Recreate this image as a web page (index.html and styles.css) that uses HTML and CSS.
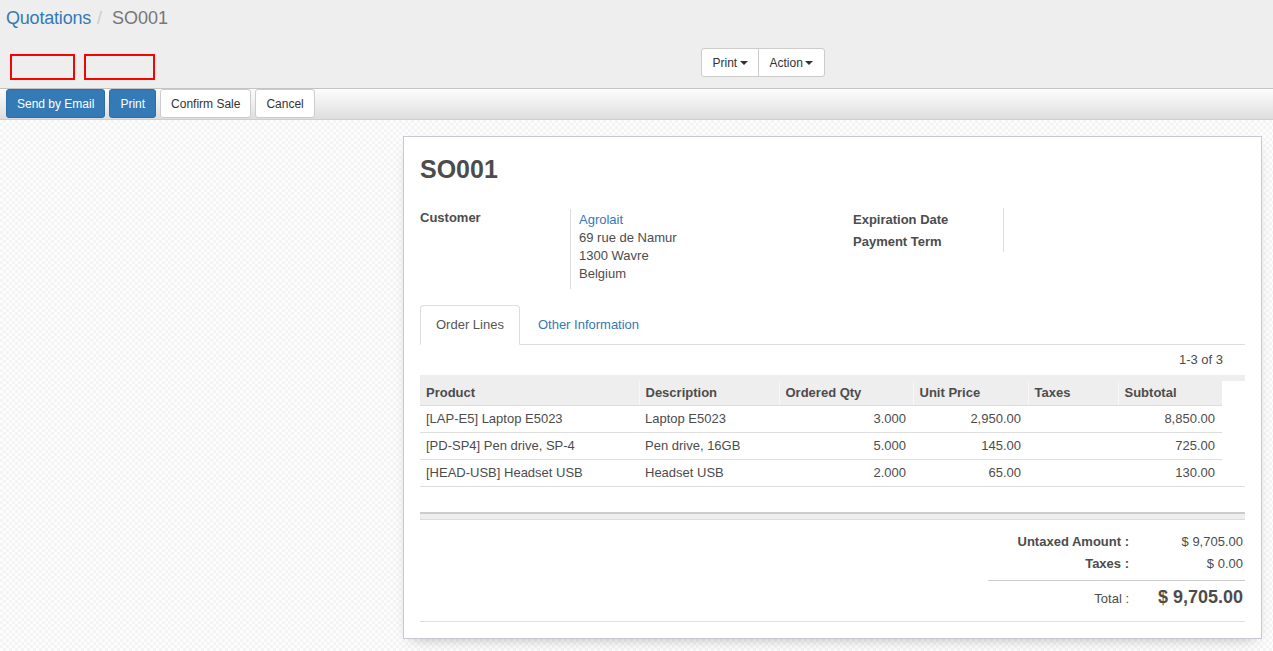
FILE: index.html
```html
<!DOCTYPE html>
<html>
<head>
<meta charset="utf-8">
<link rel="stylesheet" href="styles.css">
</head>
<body>
<header class="cp">
  <div class="crumbs"><a class="crumb-link">Quotations</a><span class="sep">/</span><span class="crumb-active">SO001</span></div>
  <div class="cp-row">
    <div class="cp-left"><div class="ph ph-a"></div><div class="ph ph-b"></div></div>
    <div class="cp-right">
      <div class="btn-group">
        <button class="gbtn">Print <span class="caret"></span></button>
        <button class="gbtn">Action <span class="caret"></span></button>
      </div>
    </div>
  </div>
</header>
<div class="statusbar">
  <button class="btn primary">Send by Email</button>
  <button class="btn primary">Print</button>
  <button class="btn plain">Confirm Sale</button>
  <button class="btn plain">Cancel</button>
</div>
<main class="content">
  <div class="sheet">
    <h1 class="title">SO001</h1>
    <div class="groups">
      <div class="group">
        <div class="label">Customer</div>
        <div class="value addr">
          <a class="link">Agrolait</a>
          <div>69 rue de Namur</div>
          <div>1300 Wavre</div>
          <div>Belgium</div>
        </div>
      </div>
      <div class="group right">
        <div class="labels">
          <div class="label row22">Expiration Date</div>
          <div class="label row22">Payment Term</div>
        </div>
        <div class="value empty"></div>
      </div>
    </div>
    <ul class="tabs">
      <li class="tab active">Order Lines</li>
      <li class="tab"><a class="link">Other Information</a></li>
    </ul>
    <div class="pager">1-3 of 3</div>
    <div class="list">
      <table class="lines">
        <thead>
          <tr>
            <th class="c1">Product</th>
            <th class="c2">Description</th>
            <th class="c3">Ordered Qty</th>
            <th class="c4">Unit Price</th>
            <th class="c5">Taxes</th>
            <th class="c6">Subtotal</th>
          </tr>
        </thead>
        <tbody>
          <tr><td>[LAP-E5] Laptop E5023</td><td>Laptop E5023</td><td class="num">3.000</td><td class="num">2,950.00</td><td></td><td class="num">8,850.00</td></tr>
          <tr><td>[PD-SP4] Pen drive, SP-4</td><td>Pen drive, 16GB</td><td class="num">5.000</td><td class="num">145.00</td><td></td><td class="num">725.00</td></tr>
          <tr><td>[HEAD-USB] Headset USB</td><td>Headset USB</td><td class="num">2.000</td><td class="num">65.00</td><td></td><td class="num">130.00</td></tr>
        </tbody>
      </table>
    </div>
    <div class="band"></div>
    <div class="totals">
      <div class="t-label strong">Untaxed Amount :</div><div class="t-val">$ 9,705.00</div>
      <div class="t-label strong">Taxes :</div><div class="t-val">$ 0.00</div>
      <div class="t-label total-l">Total :</div><div class="t-val total-v">$ 9,705.00</div>
    </div>
    <div class="endline"></div>
  </div>
</main>
</body>
</html>
```
FILE: styles.css
```css
* { box-sizing: border-box; }
html, body { margin: 0; padding: 0; }
body {
  font-family: "Liberation Sans", Arial, sans-serif;
  font-size: 13px;
  color: #4c4c4c;
  background: #fafafa;
  height: 651px;
  overflow: hidden;
}
.cp { background: #efeeee; height: 88px; }
.crumbs {
  padding: 5px 0 0 6px;
  height: 40px;
  font-size: 18px;
  line-height: 26px;
}
.crumb-link { color: #337ab7; letter-spacing: -0.2px; }
.sep { color: #ccc; margin: 0 10px 0 6px; }
.crumb-active { color: #777; }
.cp-row { display: flex; height: 48px; }
.cp-left { width: 636px; display: flex; gap: 9px; padding: 14px 0 0 10px; }
.ph { height: 26px; border: 2px solid #ff0000; }
.ph-a { width: 65px; }
.ph-b { width: 71px; }
.cp-right { padding: 8px 0 0 65px; }
.btn-group {
  display: flex;
  height: 29px;
  border: 1px solid #ccc;
  border-radius: 3px;
  background: #fff;
}
.gbtn {
  font: 12px "Liberation Sans", Arial, sans-serif;
  color: #333;
  background: transparent;
  border: 0;
  padding: 0 10.5px;
  height: 27px;
}
.gbtn + .gbtn { border-left: 1px solid #ccc; }
.caret {
  display: inline-block;
  width: 0; height: 0;
  border-top: 4px solid #333;
  border-left: 4px solid transparent;
  border-right: 4px solid transparent;
  vertical-align: middle;
  margin-left: -1px;
}
.statusbar {
  height: 32px;
  border-top: 1px solid #c3c3c3;
  border-bottom: 1px solid #cfcfcf;
  background: linear-gradient(#fdfdfd, #dedede);
  display: flex;
  gap: 4px;
  padding-left: 6px;
}
.btn {
  font: 12px "Liberation Sans", Arial, sans-serif;
  height: 29px;
  padding: 0 10px;
  border-radius: 3px;
  border: 1px solid #ccc;
}
.btn.primary { background: #337ab7; border-color: #2e6da4; color: #fff; }
.btn.plain { background: #fff; color: #333; }
.content {
  height: 531px;
  display: flex;
  justify-content: flex-end;
  padding: 16px 11px 0 0;
  background-color: #fafafa;
  background-image: repeating-conic-gradient(#f4f4f4 0 25%, #fdfdfd 0 50%);
  background-size: 6px 6px;
}
.sheet {
  width: 859px;
  height: 503px;
  background: #fff;
  border: 1px solid #c9c9d2;
  box-shadow: 0 6px 14px -8px rgba(0,0,0,0.35);
  padding: 16px;
}
.title {
  margin: 0;
  font-size: 25px;
  line-height: 32px;
  font-weight: bold;
  color: #4c4c4c;
}
.groups {
  display: grid;
  grid-template-columns: 412px 413px;
  margin-top: 24px;
}
.group { display: flex; }
.group.right { padding-left: 21px; }
.label { font-weight: bold; width: 150px; line-height: 18px; }
.labels { width: 150px; }
.row22 { line-height: 22px; }
.value { border-left: 1px solid #ddd; padding: 2px 0 6px 8px; line-height: 18px; }
.value.empty { height: 44px; padding: 0; margin-top: -1px; }
.link { color: #337ab7; }
.tabs {
  list-style: none;
  margin: 16px 0 0;
  padding: 0;
  display: flex;
  border-bottom: 1px solid #ddd;
  height: 40px;
}
.tab {
  padding: 10px 15px;
  line-height: 18px;
  height: 40px;
  margin-right: 2px;
  border: 1px solid transparent;
  border-radius: 4px 4px 0 0;
}
.tab.active {
  border-color: #ddd;
  border-bottom-color: #fff;
  background: #fff;
  color: #555;
}
.pager {
  height: 30px;
  line-height: 30px;
  text-align: right;
  padding-right: 22px;
  color: #4c4c4c;
}
.list {
  border-top: 6px solid #eee;
  border-bottom: 1px solid #ddd;
}
.lines { border-collapse: collapse; width: 802px; table-layout: fixed; }
.lines th {
  background: #eee;
  text-align: left;
  font-weight: bold;
  height: 24px;
  padding: 0 6px;
  border-bottom: 1px solid #ddd;
  border-left: 1px solid #f7f7f7;
}
.lines th.c1 { border-left: 0; width: 219px; }
.c2 { width: 140px; }
.c3 { width: 134px; }
.c4 { width: 115px; }
.c5 { width: 90px; }
.c6 { width: 104px; }
.lines td {
  height: 27px;
  padding: 0 6px;
  border-bottom: 1px solid #ddd;
  white-space: nowrap;
}
.lines tbody tr:last-child td { border-bottom: 0; height: 27px; }
.lines td.num { text-align: right; padding-right: 7px; }
.band {
  margin-top: 25px;
  height: 8px;
  border-top: 2px solid #ccc;
  background: #eee;
  border-bottom: 1px solid #ddd;
}
.totals {
  margin: 11px 0 0 auto;
  width: 257px;
  display: grid;
  grid-template-columns: 147px 110px;
}
.t-label { text-align: right; padding-right: 6px; line-height: 22px; }
.t-val { text-align: right; padding-right: 2px; line-height: 22px; }
.strong { font-weight: bold; }
.total-l, .total-v {
  border-top: 1px solid #ccc;
  margin-top: 5px;
  padding-top: 5px;
  line-height: 24px;
}
.total-l { padding-top: 6px; }
.total-v { font-size: 18px; font-weight: bold; line-height: 22px; }
.endline { margin-top: 10px; border-top: 1px solid #ddd; }
```
